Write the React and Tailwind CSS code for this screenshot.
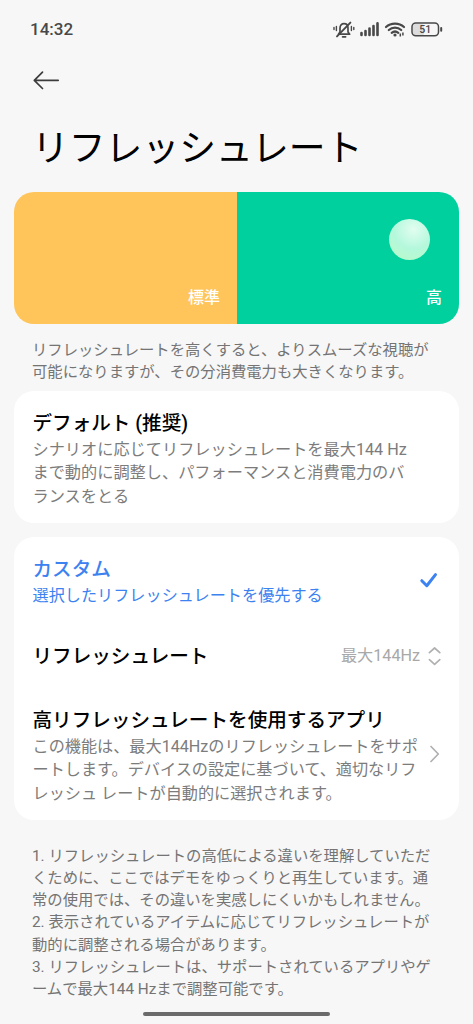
const notes = [
  ["1. リフレッシュレートの高低による違いを理解していただ", "くために、ここではデモをゆっくりと再生しています。通", "常の使用では、その違いを実感しにくいかもしれません。"],
  ["2. 表示されているアイテムに応じてリフレッシュレートが", "動的に調整される場合があります。"],
  ["3. リフレッシュレートは、サポートされているアプリやゲ", "ームで最大144 Hzまで調整可能です。"],
];

function Lines({ lines }) {
  return lines.map((line) => (
    <span key={line} className="block whitespace-nowrap">{line}</span>
  ));
}

function StatusBar() {
  return (
    <div className="flex h-[58px] items-center justify-between pl-[30px] pr-[29px] pt-[1px] text-[#484848]">
      <span className="pt-[1px] text-[17px] font-medium">14:32</span>
      <svg width="112" height="20" viewBox="0 0 112 20" fill="none" stroke="currentColor" className="shrink-0">
        {/* muted bell */}
        <g strokeWidth="1.700" strokeLinecap="round" strokeLinejoin="round">
          <path d="M6.500 14.200 8 12V8c0-2.600 1.600-4.300 4-4.300s4 1.700 4 4.300v4l1.700 2.200Z" />
          <path d="M10.600 16.800h3" />
          <path d="M5 16.400 18.400 2.600" strokeWidth="1.900" />
          <path d="M4.400 6.500v4M2 7.500v2M19.400 6.500v4M21.800 7.500v2" strokeWidth="1.400" />
        </g>
        {/* signal */}
        <path d="M29.500 13v2M33.500 11v4M37.500 8.600v6.400M41.500 6v9M45.500 3.400v11.600" strokeWidth="2.600" strokeLinecap="round" />
        {/* wifi */}
        <g strokeWidth="2.200" strokeLinecap="round">
          <path d="M54 7c5-4.600 13-4.600 18 0" />
          <path d="M56.800 10c3.500-3.200 8.900-3.200 12.400 0" />
          <path d="M59.700 12.900c2-1.700 4.600-1.700 6.600 0" />
        </g>
        <circle cx="63" cy="15" r="1.600" fill="currentColor" stroke="none" />
        <path d="M68.300 13.600v3M70.900 12.600v3" strokeWidth="1.500" />
        {/* battery */}
        <rect x="81" y="4" width="11" height="11.500" rx="2.500" fill="#dcdcdc" stroke="none" />
        <rect x="80" y="3" width="26.500" height="12.800" rx="3.800" strokeWidth="1.500" />
        <path d="M109.200 8v2.800" strokeWidth="2" strokeLinecap="round" />
        <text x="93.200" y="13.200" textAnchor="middle" fontSize="10.500" fontWeight="500" fill="currentColor" stroke="none">51</text>
      </svg>
    </div>
  );
}

function Preview() {
  return (
    <div className="relative mx-[14px] mt-[17px] flex h-[132px] overflow-hidden rounded-[20px] text-[16px] font-medium leading-[24px] text-white">
      <div className="flex w-[223px] items-end justify-end bg-[#ffc55a] pb-[14px] pr-[17px]">標準</div>
      <div className="flex flex-1 items-end justify-end bg-[#00d09e] pb-[14px] pr-[17px]">高</div>
      <div className="absolute left-[374.500px] top-[27px] size-[41px] rounded-full bg-[radial-gradient(circle_at_60%_25%,#e2fdf0_0%,#b4f8dc_50%,#b9fbc4_100%)]" />
    </div>
  );
}

export default function App() {
  return (
    <div
      lang="ja"
      className="flex h-[1024px] w-[473px] flex-col overflow-hidden bg-[#f7f7f7] font-['Roboto','Noto_Sans_CJK_JP',sans-serif] text-black"
    >
      <StatusBar />

      {/* HEADER */}
      <div className="flex h-[44px] items-center pl-[33px]">
        <svg width="28" height="20" viewBox="0 0 28 20" fill="none" stroke="#3c3c3c" strokeWidth="1.700" strokeLinecap="round" strokeLinejoin="round">
          <path d="M25.200 10.300H1.500M9.500 2.100 1.300 10.300l8.200 8.200" />
        </svg>
      </div>
      <h1 className="mt-[21px] h-[52px] pl-[32px] text-[36.800px] leading-[52px]">リフレッシュレート</h1>

      <Preview />

      <p className="mt-[15px] pl-[32px] text-[15.330px] leading-[22.300px] text-[#747474]">
        <Lines lines={["リフレッシュレートを高くすると、よりスムーズな視聴が", "可能になりますが、その分消費電力も大きくなります。"]} />
      </p>

      <section className="mx-[14px] mt-[7px] h-[132px] rounded-[20px] bg-white pl-[18.500px] pt-[19px]">
        <h2 className="text-[19.600px] font-medium leading-[28px]">デフォルト (推奨)</h2>
        <p className="text-[16.200px] leading-[23.600px] text-[#7c7c7c]">
          <Lines lines={["シナリオに応じてリフレッシュレートを最大144 Hz", "まで動的に調整し、パフォーマンスと消費電力のバ", "ランスをとる"]} />
        </p>
      </section>

      <section className="mx-[14px] mt-[14px] h-[283px] rounded-[20px] bg-white pl-[18.500px] pr-[17px] pt-[19px]">
        <div className="flex h-[52px] items-center justify-between text-[#3c82f0]">
          <div>
            <h2 className="text-[19.600px] font-medium leading-[28px]">カスタム</h2>
            <p className="text-[16.150px] leading-[24px]">選択したリフレッシュレートを優先する</p>
          </div>
          <svg width="24" height="20" viewBox="0 0 24 20" fill="none" stroke="#3c82f0" strokeWidth="3" strokeLinecap="round" strokeLinejoin="round">
            <path d="m3.800 8.700 5 5L17.500 2.600" />
          </svg>
        </div>

        <div className="mt-[29px] flex h-[40px] items-center justify-between">
          <h2 className="text-[19.600px] font-medium">リフレッシュレート</h2>
          <div className="flex items-center gap-[8px] text-[#a8a8a8]">
            <span className="text-[16.150px]">最大144Hz</span>
            <svg width="14" height="20" viewBox="0 0 14 20" fill="none" stroke="#b0b0b0" strokeWidth="1.700" strokeLinecap="round" strokeLinejoin="round">
              <path d="M1.400 5.600 6.600 1l5.200 4.600M1.400 12.700l5.200 4.600 5.200-4.600" />
            </svg>
          </div>
        </div>

        <div className="mt-[30px]">
          <h2 className="text-[19.600px] font-medium leading-[28px]">高リフレッシュレートを使用するアプリ</h2>
          <div className="flex justify-between text-[#7c7c7c]">
            <p className="text-[16.150px] leading-[23.600px]">
              <Lines lines={["この機能は、最大144Hzのリフレッシュレートをサポ", "ートします。デバイスの設定に基づいて、適切なリフ", "レッシュ レートが自動的に選択されます。"]} />
            </p>
            <svg width="14" height="20" viewBox="0 0 14 20" fill="none" stroke="#b0b0b0" strokeWidth="1.700" strokeLinecap="round" strokeLinejoin="round" className="mt-[9px] shrink-0">
              <path d="m3 2.500 7.300 7.500L3 17.500" />
            </svg>
          </div>
        </div>
      </section>

      <div className="mt-[25px] pl-[32px] text-[15.330px] leading-[22.300px] text-[#747474]">
        {notes.map((lines) => (
          <p key={lines[0]}><Lines lines={lines} /></p>
        ))}
      </div>

      {/* gesture bar */}
      <div className="mx-auto mb-[8px] mt-auto h-[4px] w-[187px] shrink-0 rounded-full bg-[#6b6b6b]" />
    </div>
  );
}
